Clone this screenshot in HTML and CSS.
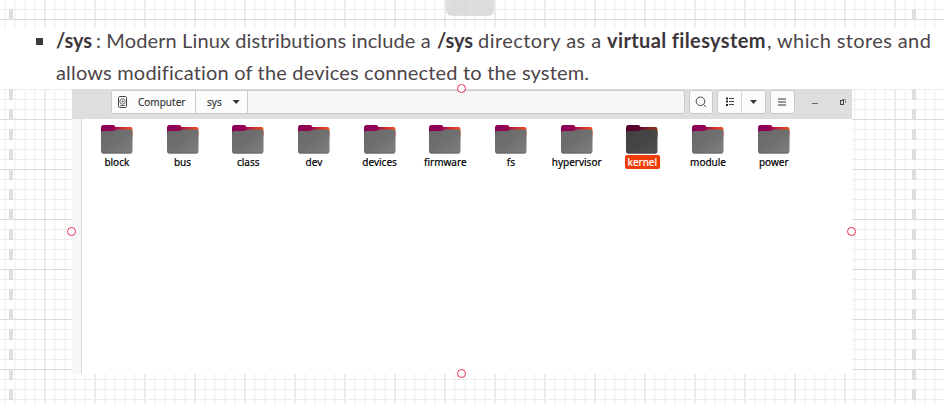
FILE: index.html
```html
<!DOCTYPE html>
<html lang="en">
<head>
<meta charset="utf-8">
<title>/sys</title>
<link rel="stylesheet" href="styles.css">
</head>
<body>
<svg class="defs" width="0" height="0" aria-hidden="true">
  <defs>
    <linearGradient id="tab" x1="0" x2="1"><stop offset="0" stop-color="#870058"/><stop offset=".4" stop-color="#970050"/><stop offset=".65" stop-color="#c92b35"/><stop offset="1" stop-color="#f4501e"/></linearGradient>
    <linearGradient id="front" x1="0" y1="0" x2="1" y2="1"><stop offset="0" stop-color="#686868"/><stop offset=".5" stop-color="#6f6f6f"/><stop offset="1" stop-color="#808080"/></linearGradient>
    <symbol id="folder" viewBox="0 0 32 30">
      <path d="M0 3Q0 0 2.500 0H12Q14 0 14.500 2H29.500Q31.500 2 31.500 5V12H0Z" fill="url(#tab)"/>
      <path d="M0 8Q0 6 2 6H11Q13 6 14 5.200Q15 4.500 17 4.500H29.500Q31.500 4.500 31.500 6.500V26.500Q31.500 28.500 29.500 28.500H2Q0 28.500 0 26.500Z" fill="url(#front)"/>
      <path d="M1.500 28.100H30" stroke="#5b5b5b" stroke-width=".7"/>
    </symbol>
  </defs>
</svg>
<main class="canvas">
  <div class="guide guide-left"></div>
  <div class="guide guide-right"></div>
  <div class="notch"></div>
  <section class="note">
    <span class="bullet"></span>
    <div class="copy">
      <div class="line"><b class="w1">/sys</b><span class="w2">: Modern Linux distributions include a</span><b class="w3">/sys</b><span class="w4">directory as a</span><b class="w5">virtual filesystem</b><span class="w6">, which stores and</span></div>
      <div class="line"><span class="w7">allows modification of the devices connected to the system.</span></div>
    </div>
  </section>
  <section class="window">
    <header class="bar">
      <div class="path">
        <div class="crumb computer"><svg width="10" height="12" viewBox="0 0 10 12" fill="none" stroke="#444"><rect x=".5" y=".5" width="8" height="11" rx="1.200"/><circle cx="4.500" cy="5.500" r="2.700" stroke-width=".8"/><circle cx="4.500" cy="5.500" r=".7" stroke-width=".8"/><path d="M2 9.500H7" stroke-width=".8"/></svg><span>Computer</span></div>
        <div class="crumb sys"><span>sys</span><i class="caret"></i></div>
      </div>
      <div class="button search"><svg width="12" height="12" viewBox="0 0 12 12" fill="none" stroke="#444"><circle cx="5.500" cy="5.300" r="4.300"/><path d="M8.500 8.500L11 11"/></svg></div>
      <div class="group"><div class="half"><svg width="10" height="10" viewBox="0 0 10 10"><path d="M1 1.500H3M1 4.500H3M1 8H3" stroke="#222" stroke-width="2"/><path d="M4 1.500H9M4 4.500H9M4 7.500H9" stroke="#444"/></svg></div><div class="half"><i class="caret"></i></div></div>
      <div class="button menu"><svg width="8" height="9" viewBox="0 0 8 9"><path d="M0 1H8M0 4H8M0 7H8" stroke="#333"/></svg></div>
      <svg class="minimize" width="6" height="2"><path d="M0 .5H6" stroke="#666"/></svg>
      <svg class="restore" width="6" height="6" viewBox="0 0 6 6" fill="none"><path d="M2 .5H5.500V4" stroke="#888"/><rect x=".5" y="1.500" width="3" height="4" stroke="#444"/></svg>
    </header>
    <div class="content">
      <div class="files">
        <div class="file"><svg><use href="#folder"/></svg><span>block</span></div>
        <div class="file"><svg><use href="#folder"/></svg><span>bus</span></div>
        <div class="file"><svg><use href="#folder"/></svg><span>class</span></div>
        <div class="file"><svg><use href="#folder"/></svg><span>dev</span></div>
        <div class="file"><svg><use href="#folder"/></svg><span>devices</span></div>
        <div class="file"><svg><use href="#folder"/></svg><span>firmware</span></div>
        <div class="file"><svg><use href="#folder"/></svg><span>fs</span></div>
        <div class="file"><svg><use href="#folder"/></svg><span>hypervisor</span></div>
        <div class="file selected"><svg><use href="#folder"/></svg><span>kernel</span></div>
        <div class="file"><svg><use href="#folder"/></svg><span>module</span></div>
        <div class="file"><svg><use href="#folder"/></svg><span>power</span></div>
      </div>
    </div>
    <i class="handle top"></i><i class="handle left"></i><i class="handle right"></i><i class="handle bottom"></i>
  </section>
</main>
</body>
</html>
```
FILE: styles.css
```css
* { box-sizing: border-box; }
body { margin: 0; overflow: hidden; }
.defs { position: absolute; }
.canvas {
  position: relative;
  width: 944px;
  height: 404px;
  padding-top: 28px;
  background-color: #fff;
  background-image:
    linear-gradient(transparent 19px, #dadada 19px, #dadada 20px, transparent 20px),
    linear-gradient(transparent 9px, #ececec 9px),
    linear-gradient(90deg, transparent 44px, #ececec 44px, #ececec 46px, transparent 46px),
    linear-gradient(90deg, transparent 4px, #f6f6f6 4px, #f6f6f6 6px, transparent 6px);
  background-size: 50px 50px, 10px 10px, 50px 50px, 10px 10px;
}
.guide {
  position: absolute;
  top: 9px;
  bottom: 0;
  width: 4px;
  background: repeating-linear-gradient(#dedede 0 11px, transparent 11px 20px);
}
.guide-left { left: 9px; }
.guide-right { left: 912px; }
.notch {
  position: absolute;
  left: 446px;
  top: 0;
  width: 48px;
  height: 16px;
  border-radius: 0 0 6px 6px;
  background: rgba(205, 205, 205, .68);
}
.note {
  position: relative;
  display: flex;
  height: 61px;
  padding-left: 36px;
  background: #fff;
  color: #4c4549;
  font: 20px/32px Lato, "Open Sans", sans-serif;
}
.bullet { width: 7px; height: 7px; margin: 10px 13px 0 0; background: #3c3a3b; }
.copy { margin-top: -4px; }
.line { display: flex; height: 32px; white-space: pre; }
.line b { color: #3d363a; }
.w1 { width: 40px; letter-spacing: -.1px; }
.w2 { width: 341px; letter-spacing: .12px; }
.w3 { width: 41px; letter-spacing: -.1px; }
.w4 { width: 129px; letter-spacing: .45px; }
.w5 { width: 160px; letter-spacing: .37px; }
.w6 { width: 177px; letter-spacing: .38px; }
.w7 { letter-spacing: .18px; }
.window {
  position: relative;
  width: 780px;
  height: 285px;
  margin-left: 72px;
  background: #fff;
  color: #333;
  font: 10px/14px "Noto Sans", "Open Sans", sans-serif;
}
.bar { display: flex; height: 30px; padding: 1px 0 0 39px; background: #dedede; }
.path, .button, .group {
  display: flex;
  height: 24px;
  border: 1px solid #c9c9c9;
  border-radius: 3px;
  background: #fcfcfc;
}
.path { width: 574px; background: #f7f7f7; overflow: hidden; }
.crumb { display: flex; align-items: center; background: #fcfcfc; border-right: 1px solid #c9c9c9; }
.crumb span { -webkit-text-stroke: .15px; }
.computer { width: 84px; padding-left: 6px; gap: 10px; }
.sys { width: 52px; padding-left: 11px; gap: 11px; }
.caret { width: 7px; height: 4px; background: #333; clip-path: polygon(0 0, 100% 0, 50% 100%); }
.button, .half { align-items: center; justify-content: center; }
.search { width: 24px; margin-left: 4px; }
.group { width: 49px; margin-left: 4px; }
.half { display: flex; flex: 1; }
.half + .half { border-left: 1px solid #d8d8d8; }
.menu { width: 25px; margin-left: 4px; }
.menu svg { margin-right: 1px; }
.minimize { margin: 13px 0 0 17px; }
.restore { margin: 9px 0 0 22px; }
.content { height: 255px; border-left: 9px solid #f7f7f7; }
.files {
  display: grid;
  grid-template-columns: repeat(11, 65.7px);
  height: 255px;
  padding: 6px 0 0 2px;
  border-left: 1px solid #dadada;
}
.file { display: flex; flex-direction: column; align-items: center; color: #000; }
.file svg { width: 32px; height: 30px; }
.file span { padding: 0 3px; border-radius: 2px; -webkit-text-stroke: .2px; }
.selected svg { filter: brightness(.62); }
.selected span { background: #f03c09; color: #fff; }
.handle {
  position: absolute;
  width: 9px;
  height: 9px;
  border: 1px solid #e62e50;
  border-radius: 50%;
  background: #fff;
}
.handle.top { left: 385px; top: -5px; }
.handle.left { left: -5px; top: 138px; }
.handle.right { left: 775px; top: 138px; }
.handle.bottom { left: 385px; top: 280px; }
```
